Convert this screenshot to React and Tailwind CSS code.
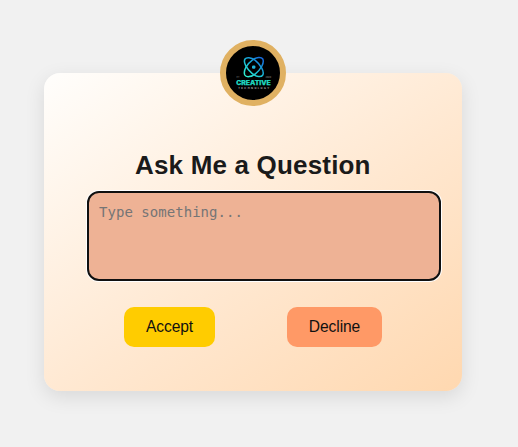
function Avatar() {
  return (
    <div className="absolute -top-[33px] left-[176px] size-[66px] rounded-full border-[6px] border-[#e0b162] bg-black">
      <svg viewBox="0 0 54 54" className="size-full">
        <defs>
          <linearGradient id="orbit" gradientUnits="userSpaceOnUse" x1="20" y1="30" x2="36" y2="12">
            <stop offset="0" stopColor="#2ff0d0" />
            <stop offset="0.5" stopColor="#18b5d6" />
            <stop offset="1" stopColor="#1769e0" />
          </linearGradient>
        </defs>
        <g fill="none" stroke="url(#orbit)" strokeWidth="1.5" strokeLinejoin="round">
          <path d="M19 13C20.4 11 25 11.2 29 14.2C34.5 18.6 38.6 25.4 36.8 29C35.2 31.6 30 30.8 26 27.4C20.5 22.6 17 16.4 19 13Z" />
          <path d="M36.8 13C35.4 10.8 30.6 11 26.6 13.8C20.8 18 17 24.8 18.8 29C20.2 31.6 25.4 31 29.4 27.8C34.8 23.4 38.6 17 36.8 13Z" />
        </g>
        <rect x="26" y="19.4" width="3.4" height="3.4" rx="1.2" fill="#1fb4d8" />
        <text x="10.2" y="38.8" textLength="34.6" lengthAdjust="spacingAndGlyphs" fill="#20dcc2" stroke="#20dcc2" strokeWidth="0.25" fontSize="6.1" fontWeight="800" fontFamily="Inter, 'Liberation Sans', sans-serif">CREATIVE</text>
        <text x="12.2" y="43.4" textLength="31" fill="#b0b0b0" fontSize="2.6" fontWeight="700" fontFamily="Inter, 'Liberation Sans', sans-serif">TECHNOLOGY</text>
        <text x="10.5" y="31.8" fill="#777" fontSize="2.3" fontFamily="Inter, 'Liberation Sans', sans-serif">ET</text>
        <text x="39.5" y="31.8" fill="#999" fontSize="2.3" fontFamily="Inter, 'Liberation Sans', sans-serif">2020</text>
      </svg>
    </div>
  );
}

export default function App() {
  return (
    <main className="flex h-[447px] w-[518px] items-start overflow-hidden bg-[#f1f1f1] pt-[73px] pl-[44px] font-['Liberation_Sans',Arial,sans-serif]">
      <section className="relative flex h-[318px] w-[418px] flex-col rounded-[16px] bg-linear-[145deg,#fffefc,#ffe8d1_55%,#ffd8b0] pt-[76px] shadow-[0_6px_20px_rgba(0,0,0,0.1)]">
        <Avatar />
        <h1 className="h-8 pl-[91px] text-[26px] leading-8 font-bold tracking-[0.18px] whitespace-nowrap text-[#1a1a1a]">
          Ask Me a Question
        </h1>
        <textarea
          placeholder="Type something..."
          className="mt-[10px] ml-[43px] block h-[90px] w-[354px] shrink-0 resize-none rounded-[12px] border-2 border-[#101010] bg-[#eeb295] px-[10px] py-[10px] font-['DejaVu_Sans_Mono',monospace] text-[14px] leading-[18px] tracking-[0.04px] shadow-[0_0_0_1px_#fff] outline-none placeholder:text-[#757575]"
        />
        <div className="mt-[26px] flex gap-[72px] pl-[80px] text-[15.6px] tracking-[-0.1px] text-[#111]">
          <button className="h-10 w-[91px] rounded-[10px] bg-[#ffcc00]">Accept</button>
          <button className="h-10 w-[95px] rounded-[10px] bg-[#ff9966]">Decline</button>
        </div>
      </section>
    </main>
  );
}
